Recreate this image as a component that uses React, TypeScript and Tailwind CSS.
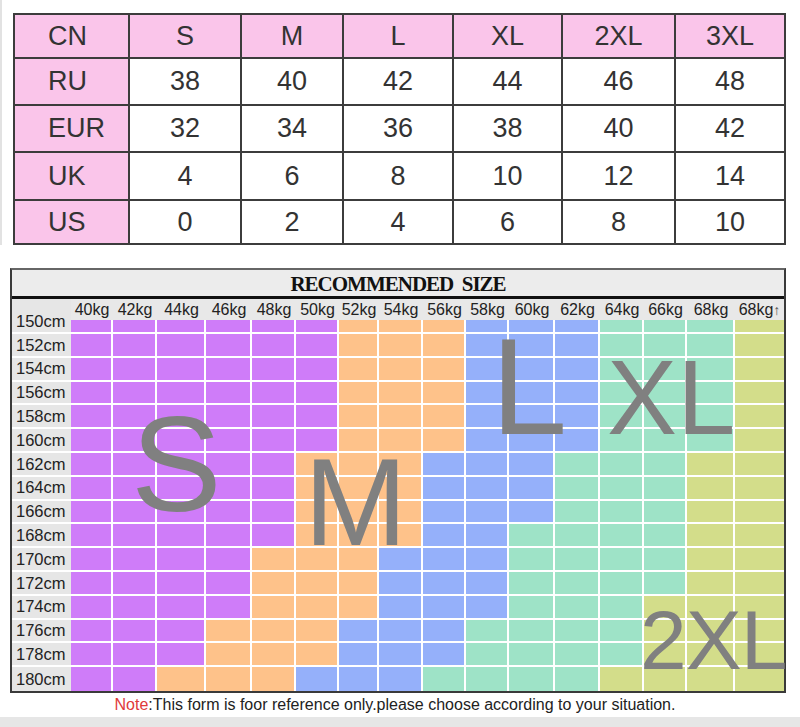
const header = ["CN", "S", "M", "L", "XL", "2XL", "3XL"]

const sizeRows = [
  ["RU", "38", "40", "42", "44", "46", "48"],
  ["EUR", "32", "34", "36", "38", "40", "42"],
  ["UK", "4", "6", "8", "10", "12", "14"],
  ["US", "0", "2", "4", "6", "8", "10"],
]

const rowHeights = ["h-[47px]", "h-[47px]", "h-[48px]", "h-[44px]"]

const weights = ["40kg", "42kg", "44kg", "46kg", "48kg", "50kg", "52kg", "54kg", "56kg", "58kg", "60kg", "62kg", "64kg", "66kg", "68kg"]

// how many cells of each size per height row: S, M, L, XL, 2XL
const heights: Array<[string, number[]]> = [
  ["150cm", [6, 3, 3, 3, 1]],
  ["152cm", [6, 3, 3, 3, 1]],
  ["154cm", [6, 3, 3, 3, 1]],
  ["156cm", [6, 3, 3, 3, 1]],
  ["158cm", [6, 3, 3, 3, 1]],
  ["160cm", [6, 3, 3, 3, 1]],
  ["162cm", [5, 3, 3, 3, 2]],
  ["164cm", [5, 3, 3, 3, 2]],
  ["166cm", [5, 3, 3, 3, 2]],
  ["168cm", [5, 3, 2, 4, 2]],
  ["170cm", [4, 3, 3, 4, 2]],
  ["172cm", [4, 3, 3, 4, 2]],
  ["174cm", [4, 3, 3, 3, 3]],
  ["176cm", [3, 3, 3, 4, 3]],
  ["178cm", [3, 3, 3, 4, 3]],
  ["180cm", [2, 3, 3, 4, 4]],
]

const fills = ["bg-[#cf7cf9]", "bg-[#fec28a]", "bg-[#95b0fa]", "bg-[#9ee3c7]", "bg-[#d3dd8a]"]

function expand(counts: number[]) {
  const out: string[] = []
  counts.forEach((n, i) => {
    for (let k = 0; k < n; k++) out.push(fills[i])
  })
  return out
}

function SizeTable() {
  return (
    <div className="flex">
      <div className="w-[2px] h-[245px] bg-[#e2e2e2]" />
      <div className="ml-[11px] mt-[13px] border-l-2 border-t-2 border-[#3c3c3c] text-[27px] text-[#333]">
        <div className="grid grid-cols-[115px_112px_102px_110px_109px_113px_110px] h-[44px] bg-[#fac5ea]">
          {header.map((h, i) => (
            <div
              key={h}
              className={`flex items-center border-r-2 border-b-2 border-[#3c3c3c] ${i === 0 ? "pl-[33px]" : "justify-center"}`}
            >
              {h}
            </div>
          ))}
        </div>
        {sizeRows.map((row, r) => (
          <div key={row[0]} className={`grid grid-cols-[115px_112px_102px_110px_109px_113px_110px] ${rowHeights[r]}`}>
            {row.map((v, i) => (
              <div
                key={i}
                className={`flex items-center border-r-2 border-b-2 border-[#3c3c3c] ${i === 0 ? "pl-[33px] bg-[#fac5ea]" : "justify-center bg-white"}`}
              >
                {v}
              </div>
            ))}
          </div>
        ))}
      </div>
    </div>
  )
}

function Chart() {
  return (
    <div className="relative ml-[10px] mt-[23px] w-[776px] border-2 border-[#3a3a3a] border-t-[#666]">
      <div className="h-[26px] flex items-center justify-center bg-[#ececec] font-['Liberation_Serif',serif] font-bold text-[21px] tracking-[-1px] text-[#111] leading-none pt-[2px]">
        RECOMMENDED{"\u00a0\u00a0"}SIZE
      </div>
      <div className="h-[3px] bg-[#111]" />
      <div className="grid grid-cols-[59px_42px_44px_49px_46px_44px_43px_40px_44px_43px_43px_46px_45px_44px_43px_48px_49px] grid-rows-[21px_14px_repeat(15,23.8px)] text-[#222]">
        <div className="row-span-2 flex items-end pl-[4px] pb-[3px] border-b-2 border-white bg-[#e6e6e6] text-[16.5px] leading-none">
          150cm
        </div>
        {weights.map((w) => (
          <div key={w} className="flex items-center justify-center bg-[#e8e8e8] text-[16px] leading-none">
            {w}
          </div>
        ))}
        <div className="flex items-center justify-center bg-[#e8e8e8] text-[16px] leading-none">
          68kg<span className="text-[14px] text-[#555]">↑</span>
        </div>
        {heights.map(([label, counts], r) => {
          const last = r === heights.length - 1
          return [
            r === 0 ? null : (
              <div
                key={label}
                className={`flex items-center pl-[4px] bg-[#e6e6e6] text-[16.5px] leading-none ${last ? "" : "border-b-2 border-white"}`}
              >
                {label}
              </div>
            ),
            ...expand(counts).map((fill, c) => (
              <div
                key={label + c}
                className={`${fill} border-white ${c < 15 ? "border-r-2" : ""} ${last ? "" : "border-b-2"}`}
              />
            )),
          ]
        })}
      </div>

      <span className="absolute left-[119px] top-[143px] text-[136px] leading-[0.75] text-[#808080]">S</span>
      <span className="absolute left-[292px] top-[186px] text-[124px] leading-[0.75] text-[#808080]">M</span>
      <span className="absolute left-[479px] top-[66px] text-[137px] leading-[0.75] text-[#808080]">L</span>
      <span className="absolute left-[595px] top-[89px] text-[105px] leading-[0.75] text-[#808080]">XL</span>
      <span className="absolute left-[628px] top-[339px] text-[84px] leading-[0.75] tracking-[-1px] text-[#808080]">2XL</span>
    </div>
  )
}

export default function App() {
  return (
    <div className="w-[800px] h-[727px] bg-white font-['Liberation_Sans',Arial,sans-serif] overflow-hidden">
      <SizeTable />
      <Chart />
      <div className="h-[24px] flex items-center justify-center text-[16px] text-[#222] pr-[10px]">
        <span className="text-[#e03a3a]">Note</span>:This form is foor reference only.please choose according to your situation.
      </div>
      <div className="h-[10px] bg-[#e6e6e6]" />
    </div>
  )
}
